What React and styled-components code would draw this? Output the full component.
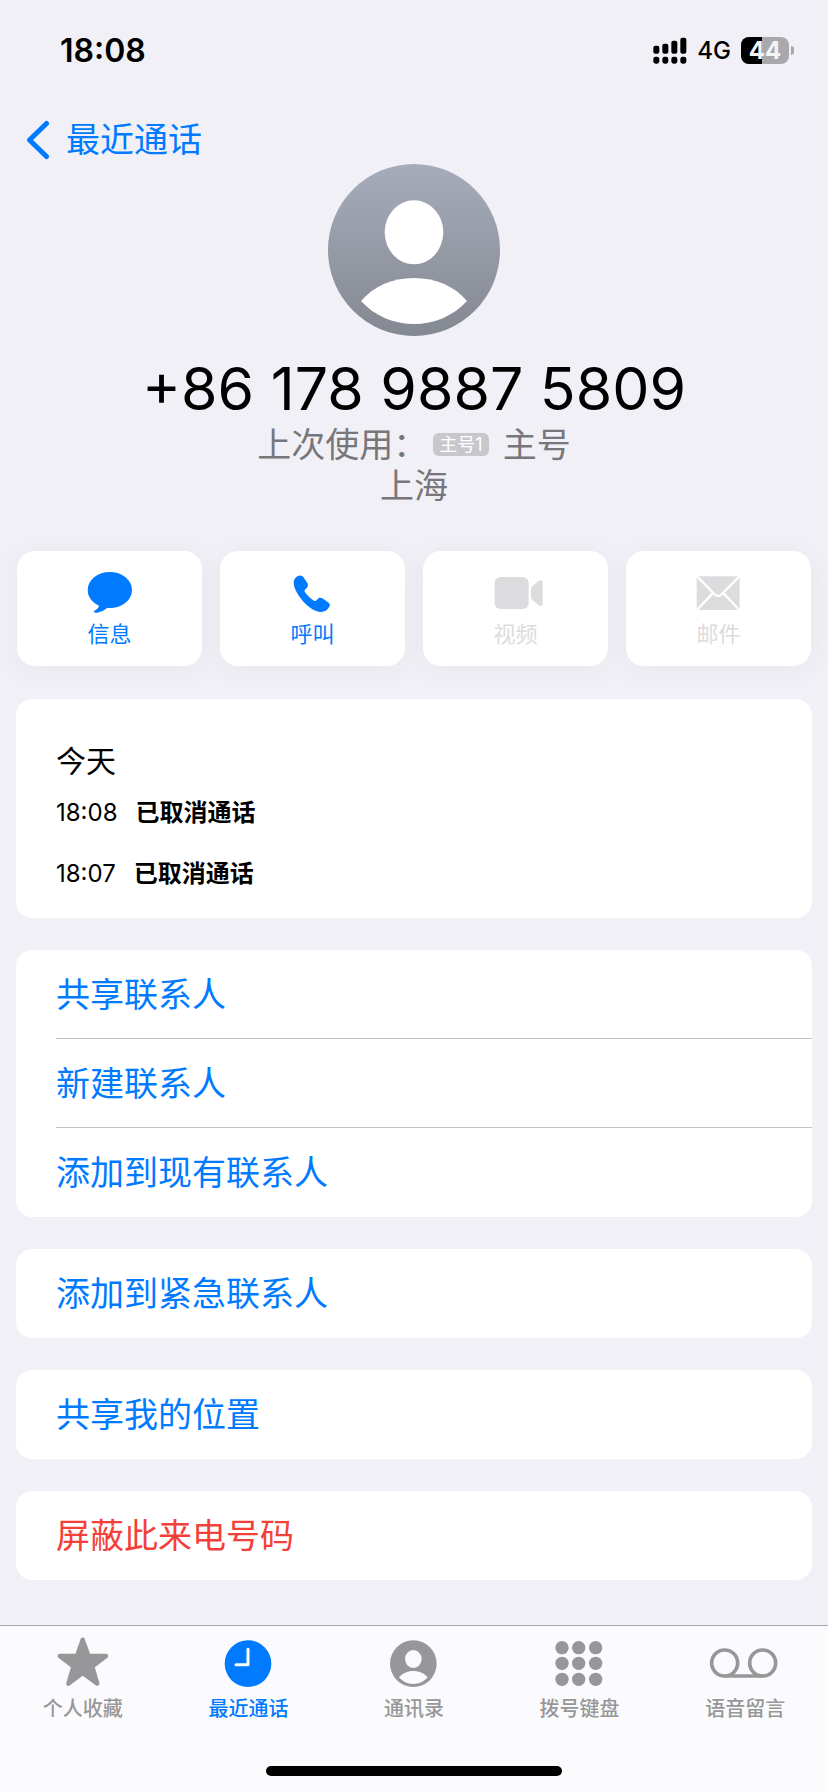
import styled, { createGlobalStyle } from 'styled-components';

const GlobalStyle = createGlobalStyle`
  * {
    box-sizing: border-box;
  }
  body {
    margin: 0;
    background: #f1f0f6;
    font-family: Inter, "Noto Sans CJK SC", sans-serif;
    color: #000;
  }
  button {
    font-family: inherit;
    border: none;
    background: none;
    padding: 0;
    margin: 0;
    cursor: pointer;
  }
`;

// Page
const Page = styled.div`
  display: flex;
  flex-direction: column;
  min-height: 100vh;
`;
const Main = styled.main`
  flex: 1;
  padding: 0 16px 12px;
`;

// Status bar
const StatusBar = styled.header`
  display: flex;
  align-items: center;
  justify-content: space-between;
  height: 100px;
  padding: 0 34px 0 60px;
`;
const Clock = styled.span`
  font-size: 32px;
  font-weight: 600;
`;
const StatusIcons = styled.div`
  display: flex;
  align-items: center;
  gap: 10px;
`;
const Network = styled.span`
  font-size: 24px;
  font-weight: 500;
`;
const Battery = styled.div`
  display: flex;
  align-items: center;
  gap: 2px;
`;
const BatteryBody = styled.div`
  position: relative;
  width: 48px;
  height: 27px;
  border-radius: 8px;
  background: #a9a8ad;
  overflow: hidden;
`;
const BatteryFill = styled.div`
  height: 100%;
  background: #000;
`;
const BatteryText = styled.span`
  position: absolute;
  inset: 0;
  text-align: center;
  font-size: 24px;
  line-height: 27px;
  font-weight: 700;
  color: #f4f4f6;
`;
const BatteryTip = styled.div`
  width: 3px;
  height: 9px;
  border-radius: 0 4px 4px 0;
  background: #a9a8ad;
`;

// Back button
const Nav = styled.nav`
  display: flex;
  height: 64px;
  padding: 16px 26px 0;
`;
const BackButton = styled.button`
  display: flex;
  align-items: center;
  gap: 16px;
  font-size: 34px;
  line-height: 50px;
  color: #007aff;
`;

// Contact header
const Profile = styled.section`
  display: flex;
  flex-direction: column;
  align-items: center;
`;
const PhoneNumber = styled.h1`
  margin: 18px 0 0;
  font-size: 59px;
  line-height: 70px;
  font-weight: 400;
`;
const SubLine = styled.p`
  display: flex;
  align-items: center;
  margin: 0;
  font-size: 34px;
  line-height: 41px;
  color: #77767b;
`;
const SimBadge = styled.span`
  margin: 0 14px 0 6px;
  padding: 0 6px;
  border-radius: 6px;
  background: #c8c7cc;
  color: #fff;
  font-size: 18px;
  line-height: 23px;
`;

// Row of quick actions
const Actions = styled.div`
  display: grid;
  grid-template-columns: repeat(4, 1fr);
  gap: 18px;
  margin: 45px 1px 33px;
`;
const ActionButton = styled.button`
  display: flex;
  flex-direction: column;
  align-items: center;
  gap: 3px;
  height: 115px;
  padding-top: 18px;
  border-radius: 18px;
  background: #fff;
  box-shadow: 0 4px 28px rgba(60, 50, 90, 0.05);
  font-size: 22px;
  line-height: 28px;
  color: #007aff;

  &:disabled {
    color: #dcdcde;
    cursor: default;
  }
`;

// Cards
const Card = styled.section`
  margin-bottom: 32px;
  border-radius: 16px;
  background: #fff;
  overflow: hidden;
`;
const History = styled(Card)`
  padding: 42px 40px 14px;
`;
const Day = styled.h2`
  margin: 0;
  font-size: 30px;
  line-height: 41px;
  font-weight: 400;
`;
const Call = styled.div`
  display: flex;
  align-items: baseline;
  gap: 18px;
  height: 61px;
  font-size: 24px;
  line-height: 61px;
`;
const CallStatus = styled.strong`
  font-weight: 700;
`;
const Row = styled.button`
  display: block;
  width: 100%;
  padding: 2px 0 0 40px;
  text-align: left;
  font-size: 34px;
  line-height: 86px;
  color: ${({ $danger }) => ($danger ? '#f4403a' : '#007aff')};
`;
const RowLabel = styled.span`
  display: block;
  border-bottom: 1px solid ${({ $divider }) => ($divider ? '#c3c3c6' : 'transparent')};
`;

// Tab bar
const TabBar = styled.footer`
  position: sticky;
  bottom: 0;
  border-top: 1px solid #a8a8ac;
  background: #fbfbfd;
  padding-bottom: 16px;
`;
const Tabs = styled.nav`
  display: grid;
  grid-template-columns: repeat(5, 1fr);
  padding: 10px 0 44px;
`;
const Tab = styled.button`
  display: flex;
  flex-direction: column;
  align-items: center;
  gap: 4px;
  font-size: 20px;
  line-height: 26px;
  font-weight: 500;
  color: ${({ $active }) => ($active ? '#007aff' : '#979799')};
`;
const HomeIndicator = styled.div`
  width: 296px;
  height: 10px;
  margin: 0 auto;
  border-radius: 5px;
  background: #000;
`;

// Icons
const SignalIcon = () => (
  <svg width="34" height="27" viewBox="0 0 102 81" aria-hidden="true">
    <rect x="1" y="26" width="18" height="24" rx="6" />
    <rect x="28" y="20" width="18" height="30" rx="6" />
    <rect x="55" y="11" width="18" height="39" rx="6" />
    <rect x="82" y="2" width="18" height="48" rx="6" />
    <rect x="1" y="59" width="18" height="21" rx="7" />
    <rect x="28" y="59" width="18" height="21" rx="7" />
    <rect x="55" y="59" width="18" height="21" rx="7" />
    <rect x="82" y="59" width="18" height="21" rx="7" />
  </svg>
);

const ChevronIcon = () => (
  <svg width="24" height="40" viewBox="0 0 24 40" fill="none" aria-hidden="true">
    <path
      d="M20.500 3.500 3.500 20l17 16.500"
      stroke="currentColor"
      strokeWidth="5"
      strokeLinecap="round"
      strokeLinejoin="round"
    />
  </svg>
);

const Avatar = () => (
  <svg width="172" height="172" viewBox="84 42 516 516" aria-hidden="true">
    <defs>
      <linearGradient id="avatar" x1="0" y1="0" x2="0" y2="1">
        <stop offset="0" stopColor="#a6acba" />
        <stop offset="1" stopColor="#848891" />
      </linearGradient>
    </defs>
    <circle cx="342" cy="300" r="258" fill="url(#avatar)" />
    <ellipse cx="342" cy="247" rx="88" ry="96" fill="#fff" />
    <path
      d="M183 453C220 410 275 384 342 384S465 410 501 453C460 498 402 522 342 522S224 498 183 453Z"
      fill="#fff"
    />
  </svg>
);

const ActionIcon = ({ x, children }) => (
  <svg width="56" height="48" viewBox={`${x} 117 168 144`} fill="currentColor" aria-hidden="true">
    {children}
  </svg>
);

const MessageIcon = () => (
  <ActionIcon x={244}>
    <ellipse cx="327.500" cy="180" rx="66.500" ry="54" />
    <path d="M288 220C296 224 297 228 292 234C288 239 282 241 280 244C278 248 284 249 290 248C303 246 312 240 323 232Z" />
  </ActionIcon>
);

const PhoneIcon = () => (
  <ActionIcon x={853}>
    <path d="M896 137C903 136 908 140 910 144L920 159C923 164 922 170 918 174L914 178C911 181 911 184 913 187C920 197 932 208 940 212C943 214 946 212 949 209C954 203 959 202 965 205L984 218C989 222 988 227 985 232C980 241 971 246 961 246C940 245 918 228 904 210C890 192 879 172 879 158C879 147 886 139 896 137Z" />
  </ActionIcon>
);

const VideoIcon = () => (
  <ActionIcon x={232}>
    <rect x="252" y="141" width="102" height="96" rx="18" />
    <path d="M361 177C361 173 363 170 366 167L384 152C389 149 396 150 396 157V221C396 228 389 229 384 226L366 211C363 208 361 205 361 201Z" />
  </ActionIcon>
);

const MailIcon = () => (
  <ActionIcon x={841}>
    <rect x="858" y="139" width="129" height="101" rx="6" />
    <path
      d="M859 139 911 192Q922 204 934 192L986 139M859 240 906 190M986 240 939 190"
      fill="none"
      stroke="#fff"
      strokeWidth="7"
    />
  </ActionIcon>
);

const TabIcon = ({ x, children }) => (
  <svg width="72" height="56" viewBox={`${x} 108 216 168`} fill="currentColor" aria-hidden="true">
    {children}
  </svg>
);

const StarIcon = () => (
  <TabIcon x={140}>
    <path
      d="M247 119 265 168H317L276 200 291 251 247 219 204 251 219 200 178 168H230Z"
      stroke="currentColor"
      strokeWidth="13"
      strokeLinejoin="round"
    />
  </TabIcon>
);

const RecentsIcon = () => (
  <TabIcon x={637}>
    <circle cx="745" cy="191" r="70" />
    <path
      d="M745 148V194H709"
      fill="none"
      stroke="#fff"
      strokeWidth="9"
      strokeLinecap="round"
      strokeLinejoin="round"
    />
  </TabIcon>
);

const ContactsIcon = () => (
  <TabIcon x={1131}>
    <circle cx="1237" cy="191" r="70" />
    <ellipse cx="1237" cy="177" rx="25" ry="27" fill="#fbfbfd" />
    <path
      d="M1194 232C1204 220 1219 213 1237 213S1270 220 1280 232C1269 245 1254 252 1237 252S1205 245 1194 232Z"
      fill="#fbfbfd"
    />
  </TabIcon>
);

const KeypadIcon = () => (
  <TabIcon x={407}>
    {[143, 190, 238].map((cy) =>
      [461, 511, 562].map((cx) => <circle key={`${cx}-${cy}`} cx={cx} cy={cy} r="20" />)
    )}
  </TabIcon>
);

const VoicemailIcon = () => (
  <TabIcon x={904}>
    <g fill="none" stroke="currentColor" strokeWidth="11">
      <circle cx="951" cy="189" r="39" />
      <circle cx="1065" cy="189" r="39" />
      <path d="M951 228H1065" />
    </g>
  </TabIcon>
);

// Data
const actions = [
  { label: '信息', Icon: MessageIcon },
  { label: '呼叫', Icon: PhoneIcon },
  { label: '视频', Icon: VideoIcon, disabled: true },
  { label: '邮件', Icon: MailIcon, disabled: true },
];

const calls = [
  { time: '18:08', status: '已取消通话' },
  { time: '18:07', status: '已取消通话' },
];

const groups = [
  [{ label: '共享联系人' }, { label: '新建联系人' }, { label: '添加到现有联系人' }],
  [{ label: '添加到紧急联系人' }],
  [{ label: '共享我的位置' }],
  [{ label: '屏蔽此来电号码', danger: true }],
];

const tabs = [
  { label: '个人收藏', Icon: StarIcon },
  { label: '最近通话', Icon: RecentsIcon, active: true },
  { label: '通讯录', Icon: ContactsIcon },
  { label: '拨号键盘', Icon: KeypadIcon },
  { label: '语音留言', Icon: VoicemailIcon },
];

const battery = 44;

function App() {
  return (
    <Page>
      <GlobalStyle />
      <StatusBar>
        <Clock>18:08</Clock>
        <StatusIcons>
          <SignalIcon />
          <Network>4G</Network>
          <Battery>
            <BatteryBody>
              <BatteryFill style={{ width: `${battery}%` }} />
              <BatteryText>{battery}</BatteryText>
            </BatteryBody>
            <BatteryTip />
          </Battery>
        </StatusIcons>
      </StatusBar>
      <Nav>
        <BackButton>
          <ChevronIcon />
          最近通话
        </BackButton>
      </Nav>
      <Main>
        <Profile>
          <Avatar />
          <PhoneNumber>+86 178 9887 5809</PhoneNumber>
          <SubLine>
            上次使用：
            <SimBadge>主号1</SimBadge>
            主号
          </SubLine>
          <SubLine>上海</SubLine>
        </Profile>
        <Actions>
          {actions.map(({ label, Icon, disabled }) => (
            <ActionButton key={label} disabled={disabled}>
              <Icon />
              {label}
            </ActionButton>
          ))}
        </Actions>
        <History>
          <Day>今天</Day>
          {calls.map(({ time, status }) => (
            <Call key={time}>
              <span>{time}</span>
              <CallStatus>{status}</CallStatus>
            </Call>
          ))}
        </History>
        {groups.map((rows) => (
          <Card key={rows[0].label}>
            {rows.map(({ label, danger }, i) => (
              <Row key={label} $danger={danger}>
                <RowLabel $divider={i < rows.length - 1}>{label}</RowLabel>
              </Row>
            ))}
          </Card>
        ))}
      </Main>
      <TabBar>
        <Tabs>
          {tabs.map(({ label, Icon, active }) => (
            <Tab key={label} $active={active}>
              <Icon />
              {label}
            </Tab>
          ))}
        </Tabs>
        <HomeIndicator />
      </TabBar>
    </Page>
  );
}

export default App;
